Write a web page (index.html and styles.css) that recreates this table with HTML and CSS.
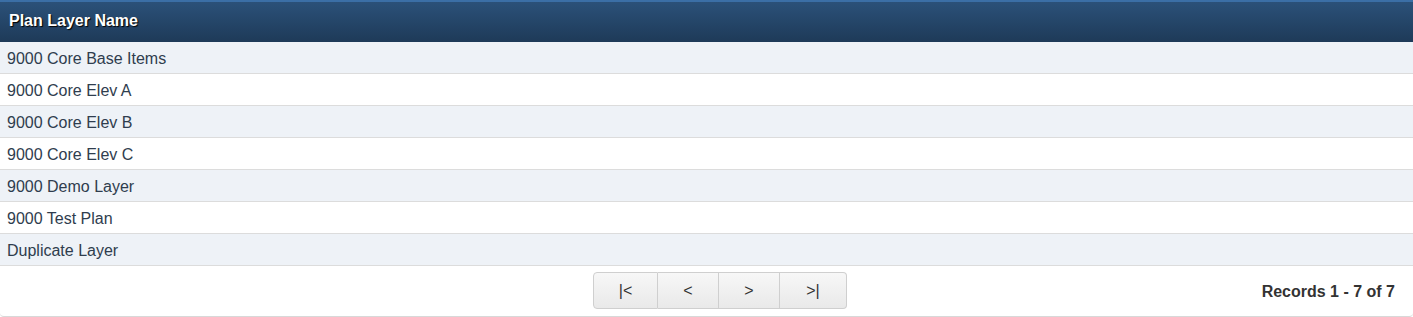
FILE: index.html
```html
<!DOCTYPE html>
<html>
<head>
<meta charset="utf-8">
<link rel="stylesheet" href="styles.css">
</head>
<body>
<div class="grid">
  <div class="head">Plan Layer Name</div>
  <div class="row alt">9000 Core Base Items</div>
  <div class="row">9000 Core Elev A</div>
  <div class="row alt">9000 Core Elev B</div>
  <div class="row">9000 Core Elev C</div>
  <div class="row alt">9000 Demo Layer</div>
  <div class="row">9000 Test Plan</div>
  <div class="row alt">Duplicate Layer</div>
  <div class="foot">
    <div class="spacer"></div>
    <div class="pager">
      <button class="btn b1">|&lt;</button>
      <button class="btn b2">&lt;</button>
      <button class="btn b3">&gt;</button>
      <button class="btn b4">&gt;|</button>
    </div>
    <div class="records">Records 1 - 7 of 7</div>
  </div>
</div>
</body>
</html>
```
FILE: styles.css
```css
html, body {
  margin: 0;
  padding: 0;
  background: #fff;
}
body {
  font-family: "Liberation Sans", Arial, sans-serif;
  font-size: 16px;
}
.grid {
  width: 1413px;
  height: 317px;
  box-sizing: border-box;
  border-bottom: 1px solid #d8d8d8;
  border-bottom-left-radius: 4px;
  border-bottom-right-radius: 4px;
  overflow: hidden;
}
.head {
  box-sizing: border-box;
  height: 42px;
  border-top: 2px solid #3b6fa6;
  background: linear-gradient(#2b5179, #1e3a58);
  color: #fff;
  font-weight: bold;
  font-size: 16px;
  padding-left: 9px;
  line-height: 38px;
  text-shadow: 1px 1px 1px #000;
}
.row {
  box-sizing: border-box;
  height: 32px;
  border-bottom: 1px solid #dcdcdc;
  padding-left: 7px;
  padding-top: 1px;
  line-height: 32px;
  color: #2f3d4e;
  background: #fff;
}
.row.alt {
  background: #eef2f7;
}
.foot {
  display: grid;
  grid-template-columns: 593px auto 1fr;
  align-items: start;
  height: 50px;
  padding-top: 6px;
  box-sizing: border-box;
}
.pager {
  display: flex;
}
.btn {
  font-family: "Liberation Sans", Arial, sans-serif;
  font-size: 16px;
  color: #333;
  height: 37px;
  margin: 0;
  padding: 0;
  border: 1px solid #cfcfcf;
  border-left-width: 0;
  background: linear-gradient(#f7f7f7, #e9e9e9);
  cursor: pointer;
}
.b1 { width: 65px; border-left-width: 1px; border-radius: 4px 0 0 4px; }
.b2 { width: 61px; }
.b3 { width: 61px; }
.b4 { width: 67px; border-radius: 0 4px 4px 0; }
.records {
  justify-self: end;
  padding-right: 18px;
  padding-top: 1px;
  font-weight: bold;
  color: #333;
  line-height: 37px;
}
```
